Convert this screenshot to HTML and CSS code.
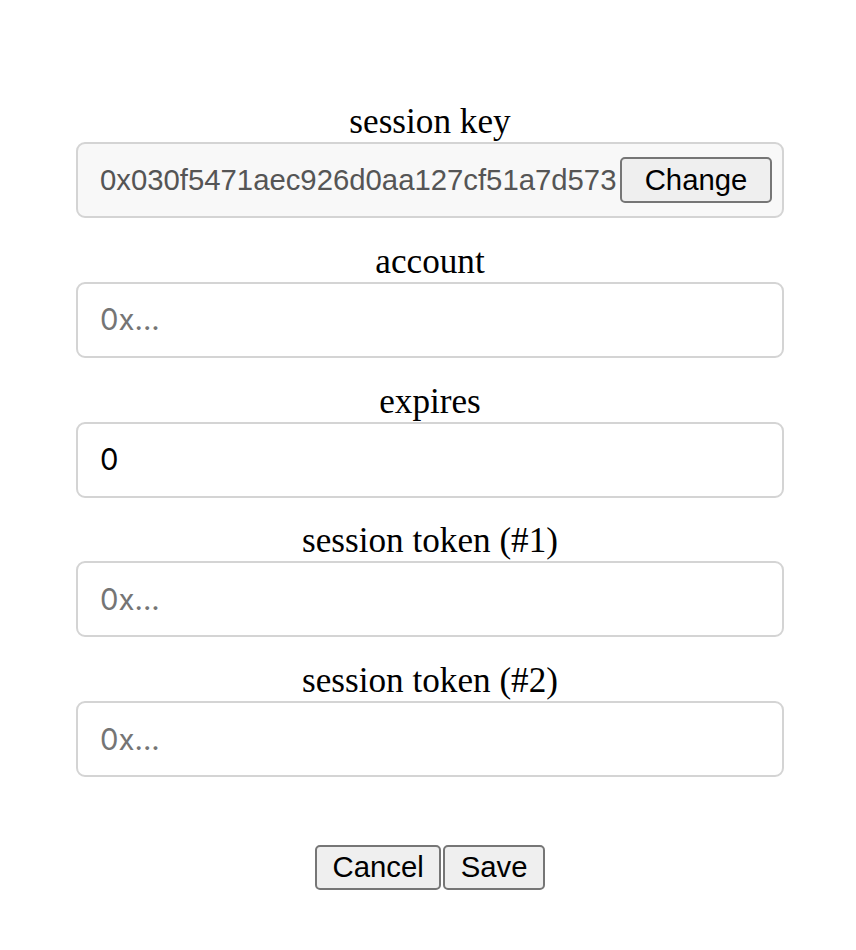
FILE: index.html
```html
<!DOCTYPE html>
<html>
<head>
<meta charset="utf-8">
<link rel="stylesheet" href="styles.css">
</head>
<body>
<form class="form">
  <label class="field">
    <span class="label">session key</span>
    <div class="key-box">
      <span class="key-text">0x030f5471aec926d0aa127cf51a7d573</span>
      <button type="button" class="btn btn-change">Change</button>
    </div>
  </label>
  <label class="field">
    <span class="label">account</span>
    <input class="input" type="text" placeholder="0x...">
  </label>
  <label class="field">
    <span class="label">expires</span>
    <input class="input" type="text" value="0">
  </label>
  <label class="field">
    <span class="label">session token (#1)</span>
    <input class="input" type="text" placeholder="0x...">
  </label>
  <label class="field">
    <span class="label">session token (#2)</span>
    <input class="input" type="text" placeholder="0x...">
  </label>
  <div class="actions">
    <button type="button" class="btn btn-action">Cancel</button>
    <button type="button" class="btn btn-action">Save</button>
  </div>
</form>
</body>
</html>
```
FILE: styles.css
```css
html, body {
  margin: 0;
  padding: 0;
  background: #ffffff;
}
body {
  font-family: "Liberation Serif", "Times New Roman", serif;
  padding-left: 4px;
}
.form {
  width: 708px;
  margin: 0 auto;
  padding-top: 102px;
  display: flex;
  flex-direction: column;
  gap: 23.75px;
}
.field {
  display: flex;
  flex-direction: column;
}
.label {
  display: block;
  text-align: center;
  font-size: 35.2px;
  line-height: 40px;
  color: #000;
}
.key-box {
  box-sizing: border-box;
  height: 76px;
  display: flex;
  align-items: center;
  padding: 0 10px 0 22px;
  border: 2px solid #d4d4d4;
  border-radius: 9px;
  background: #f8f8f8;
}
.key-text {
  flex: 1;
  min-width: 0;
  overflow: hidden;
  white-space: nowrap;
  font-family: "Liberation Sans", Arial, sans-serif;
  font-size: 29.3px;
  color: #555555;
}
.input {
  box-sizing: border-box;
  height: 76px;
  width: 100%;
  margin: 0;
  padding: 0 22px;
  border: 2px solid #d4d4d4;
  border-radius: 9px;
  background: #ffffff;
  font-family: Inter, "Noto Sans", sans-serif;
  font-size: 29.3px;
  color: #000;
  outline: none;
}
.input::placeholder {
  color: #757575;
}
.btn {
  box-sizing: border-box;
  margin: 0;
  font-family: "Liberation Sans", Arial, sans-serif;
  font-size: 29.3px;
  color: #000;
  background: #efefef;
  border: 2px solid #767676;
  border-radius: 5px;
  cursor: pointer;
}
.btn-change {
  height: 46px;
  width: 152px;
  padding: 0;
  flex: none;
}
.actions {
  display: flex;
  justify-content: center;
  gap: 2px;
  margin-top: 44px;
}
.btn-action {
  height: 45px;
  padding: 0 15.5px;
}
```
